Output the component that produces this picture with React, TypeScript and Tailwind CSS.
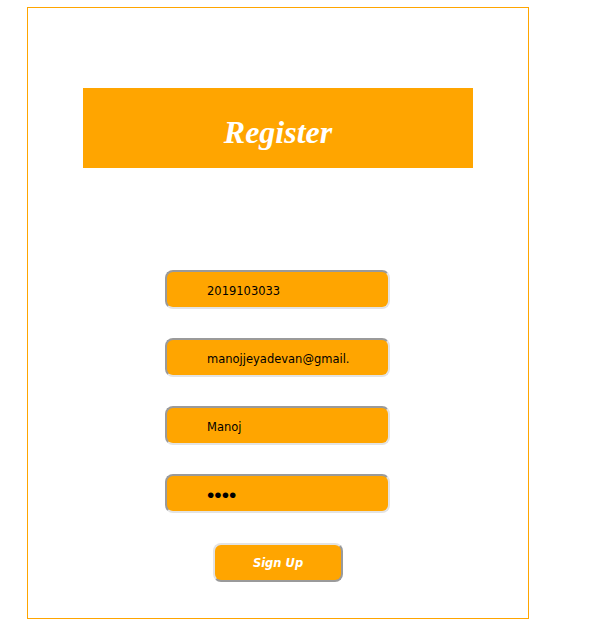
export default function App() {
  const fields = [
    { value: "2019103033", type: "text" },
    { value: "manojjeyadevan@gmail.com", type: "text" },
    { value: "Manoj", type: "text" },
    { value: "abcd", type: "password" },
  ];

  return (
    <div className="bg-white min-h-[625px] pt-[7px]">
      <div className="ml-[27px] w-[502px] h-[612px] border border-[#ffa500] flex flex-col items-center">
        {/* header */}
        <div className="mt-[80px] w-[390px] h-[80px] bg-[#ffa500] flex items-center justify-center">
          <h1 className="text-white text-[32px] font-bold italic font-['Liberation_Serif',serif] pt-[7px]">
            Register
          </h1>
        </div>

        {/* fields */}
        <div className="mt-[102px] flex flex-col gap-[29px] pr-[1px]">
          {fields.map((f, i) => (
            <input
              key={i}
              type={f.type}
              defaultValue={f.value}
              readOnly
              className={`w-[225px] h-[39px] rounded-[8px] bg-[#ffa500] border-2 border-t-[#9a9a9a] border-l-[#9a9a9a] border-b-[#e3e3e3] border-r-[#e3e3e3] pl-[40px] pr-[38px] pt-[3px] outline-none text-black ${f.type === "password" ? "text-[21px] font-['Liberation_Sans',sans-serif]" : "text-[11.5px] font-['DejaVu_Sans',sans-serif]"}`}
            />
          ))}
        </div>

        <button className="mt-[30px] w-[130px] h-[39px] rounded-[8px] bg-[#ffa500] border-2 border-t-[#e3e3e3] border-l-[#e3e3e3] border-b-[#9a9a9a] border-r-[#9a9a9a] pt-[3px] text-white text-[11.5px] font-bold italic font-['DejaVu_Sans',sans-serif]">
          Sign Up
        </button>
      </div>
    </div>
  );
}
